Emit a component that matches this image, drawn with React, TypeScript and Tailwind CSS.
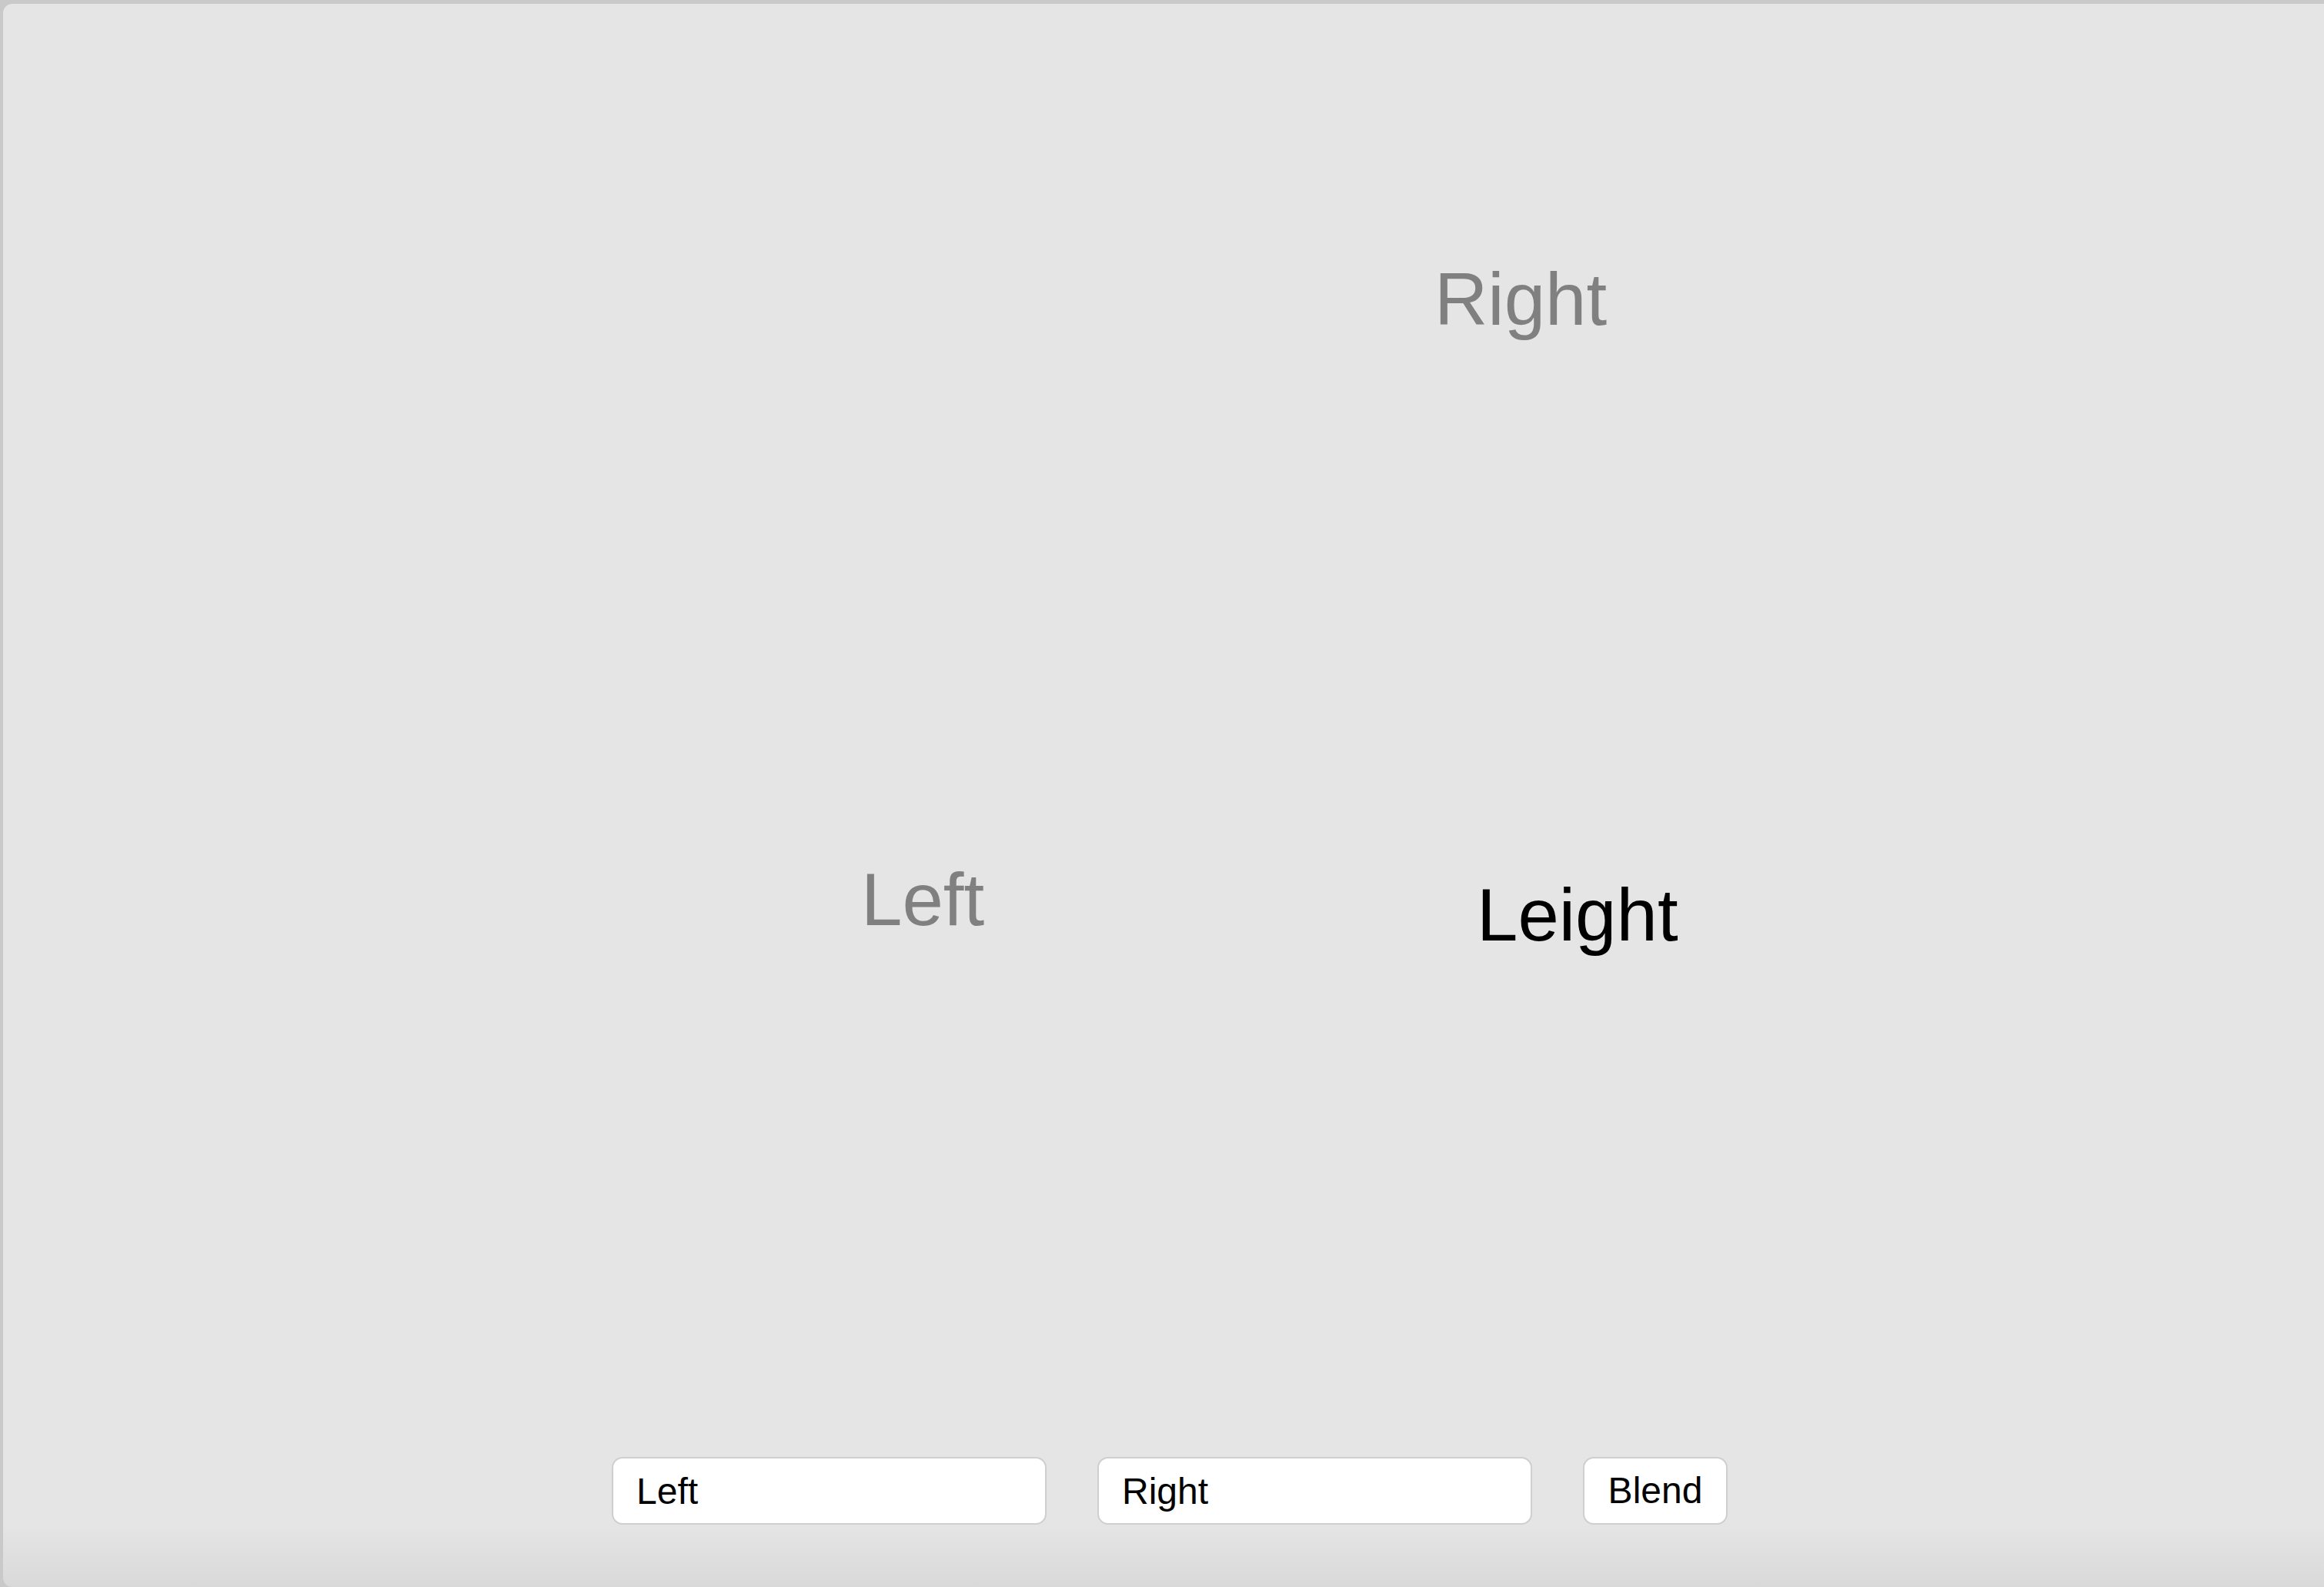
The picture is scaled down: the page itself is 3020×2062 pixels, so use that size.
export default function App() {
  return (
    <div className="w-[3020px] h-[2062px] overflow-hidden bg-[#c9c9c9] pt-[5px] pl-[4px] font-['Liberation_Sans',Arial,sans-serif]">
      <div className="relative flex flex-col w-[3016px] h-[2057px] rounded-tl-[12px] rounded-bl-[12px] bg-[linear-gradient(180deg,#e5e5e5_0%,#e5e5e5_96%,#d9d9d9_100%)]">
        {/* blend canvas */}
        <div className="relative flex-1">
          <div className="absolute left-[1860px] top-[336px] text-[96px] leading-[96px] text-[#808080]">Right</div>
          <div className="absolute left-[1115px] top-[1116px] text-[96px] leading-[96px] text-[#808080]">Left</div>
          <div className="absolute left-[1915px] top-[1136px] text-[96px] leading-[96px] text-black">Leight</div>
        </div>

        <div className="flex justify-center gap-[66px] pl-[16px] pb-[81px]">
          <input
            readOnly
            value="Left"
            className="w-[565px] h-[88px] rounded-[14px] border-2 border-[#cfcfcf] bg-white px-[30px] text-[48px] text-black outline-none"
          />
          <input
            readOnly
            value="Right"
            className="w-[565px] h-[88px] rounded-[14px] border-2 border-[#cfcfcf] bg-white px-[30px] text-[48px] text-black outline-none"
          />
          <button className="w-[188px] h-[88px] rounded-[14px] border-2 border-[#cfcfcf] bg-white text-[48px] text-black">
            Blend
          </button>
        </div>
      </div>
    </div>
  );
}
